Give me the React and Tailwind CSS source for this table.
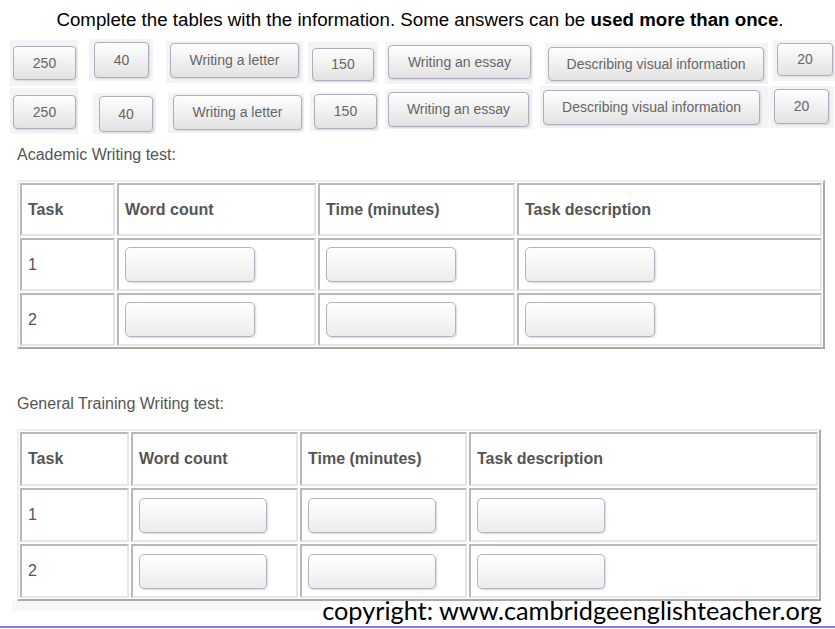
import React from "react";

const row1 = [
  { label: "250", tile: "ml-[10px] mt-[2px] pl-[3px] pt-[6px] pr-[2px] pb-[6px]", btn: "w-[63px] h-[34px]" },
  { label: "40", tile: "ml-[11px] mt-[1px] pl-[5px] pt-[3px] pr-[4px] pb-[3px]", btn: "w-[55px] h-[36px]" },
  { label: "Writing a letter", tile: "ml-[13px] mt-[3px] pl-[4px] pt-[2px] pr-[4px] pb-[5px]", btn: "w-[129px] h-[35px]" },
  { label: "150", tile: "ml-[5px] mt-[4px] pl-[4px] pt-[6px] pr-[4px] pb-[2px]", btn: "w-[62px] h-[33px]" },
  { label: "Writing an essay", tile: "ml-[7px] mt-[4px] pl-[3px] pt-[3px] pr-[2px] pb-[5px]", btn: "w-[143px] h-[34px]" },
  { label: "Describing visual information", tile: "ml-[12px] mt-[5px] pl-[3px] pt-[4px] pr-[4px] pb-[3px]", btn: "w-[216px] h-[34px]" },
  { label: "20", tile: "ml-[5px] mt-[2px] pl-[4px] pt-[3px] pr-[2px] pb-[5px]", btn: "w-[56px] h-[33px]" },
];

const row2 = [
  { label: "250", tile: "ml-[10px] mt-[2px] pl-[3px] pt-[7px] pr-[2px] pb-[5px]", btn: "w-[63px] h-[34px]" },
  { label: "40", tile: "ml-[15px] mt-[7px] pl-[6px] pt-[3px] pr-[3px] pb-[2px]", btn: "w-[54px] h-[36px]" },
  { label: "Writing a letter", tile: "ml-[12px] mt-[7px] pl-[5px] pt-[2px] pr-[2px] pb-[3px]", btn: "w-[129px] h-[35px]" },
  { label: "150", tile: "ml-[6px] mt-[6px] pl-[4px] pt-[2px] pr-[2px] pb-[2px]", btn: "w-[63px] h-[35px]" },
  { label: "Writing an essay", tile: "ml-[6px] mt-[3px] pl-[3px] pt-[3px] pr-[4px] pb-[2px]", btn: "w-[141px] h-[35px]" },
  { label: "Describing visual information", tile: "ml-[7px] mt-0 pl-[3px] pt-[4px] pr-[9px] pb-[3px]", btn: "w-[217px] h-[35px]" },
  { label: "20", tile: "ml-[1px] mt-0 pl-[4px] pt-[3px] pr-[5px] pb-[4px]", btn: "w-[55px] h-[35px]" },
];

const Chip = ({ label, tile, btn }) => (
  <div className={`bg-[#f4f4f4] ${tile}`}>
    <div
      className={`${btn} flex items-center justify-center rounded-[4px] border border-[#b3aabf] bg-linear-to-b from-white to-[#e2e2e2] shadow-[1px_1px_2px_rgba(0,0,0,0.12)] text-[14px] text-[#666]`}
    >
      {label}
    </div>
  </div>
);

const cell =
  "flex items-center pl-[6px] border-2 border-t-[#b8b8b8] border-l-[#b8b8b8] border-b-[#e6e6e6] border-r-[#e6e6e6]";

const Blank = ({ w }) => (
  <div
    className={`${w} h-[35px] rounded-[5px] border border-[#b8b0c2] bg-linear-to-b from-white to-[#ececec] shadow-[1px_1px_2px_rgba(0,0,0,0.15)]`}
  />
);

const WritingTable = ({ grid, blank }) => {
  const headers = ["Task", "Word count", "Time (minutes)", "Task description"];
  return (
    <div
      className={`grid ${grid} gap-[2px] p-[1px] border-2 border-t-[#eeeeee] border-l-[#eeeeee] border-b-[#a9a9a9] border-r-[#a9a9a9]`}
    >
      {headers.map((h) => (
        <div key={h} className={`${cell} font-bold text-[16px] text-[#555]`}>
          {h}
        </div>
      ))}
      {["1", "2"].map((n) => (
        <React.Fragment key={n}>
          <div className={`${cell} text-[16px] text-[#555]`}>{n}</div>
          <div className={cell}>
            <Blank w={blank} />
          </div>
          <div className={cell}>
            <Blank w={blank} />
          </div>
          <div className={cell}>
            <Blank w={blank} />
          </div>
        </React.Fragment>
      ))}
    </div>
  );
};

export default function App() {
  return (
    <div className="w-[835px] h-[629px] overflow-hidden bg-white font-['Liberation_Sans',Arial,sans-serif]">
      <p className="mt-[9px] pl-[5px] text-center text-[18.7px] leading-[22px] text-black">
        Complete the tables with the information. Some answers can be{" "}
        <span className="font-bold">used more than once</span>.
      </p>

      <div className="mt-[7px] flex items-start">
        {row1.map((c, i) => (
          <Chip key={i} {...c} />
        ))}
      </div>
      <div className="flex items-start">
        {row2.map((c, i) => (
          <Chip key={i} {...c} />
        ))}
      </div>

      <h2 className="mt-[12px] ml-[17px] text-[16px] leading-[18px] text-[#555]">Academic Writing test:</h2>
      <div className="mt-[16px] ml-[17px] w-[808px]">
        <WritingTable grid="grid-cols-[95px_199px_197px_305px] grid-rows-[53px_53px_53px]" blank="w-[130px]" />
      </div>

      <h2 className="mt-[46px] ml-[17px] text-[16px] leading-[18px] text-[#555]">General Training Writing test:</h2>
      <div className="mt-[16px] ml-[17px] w-[804px]">
        <WritingTable grid="grid-cols-[109px_167px_167px_349px] grid-rows-[54px_54px_54px]" blank="w-[128px]" />
      </div>

      <div className="flex items-start">
        <div className="ml-[12px] h-[10px] flex-1 bg-[#f7f7f7]" />
        <div className="bg-white pr-[13px] font-['Lato',sans-serif] text-[25.3px] leading-[19px] text-black">
          copyright: www.cambridgeenglishteacher.org
        </div>
      </div>
      <div className="mt-[6px] h-[2px] bg-[#7f7fdf]" />
    </div>
  );
}
